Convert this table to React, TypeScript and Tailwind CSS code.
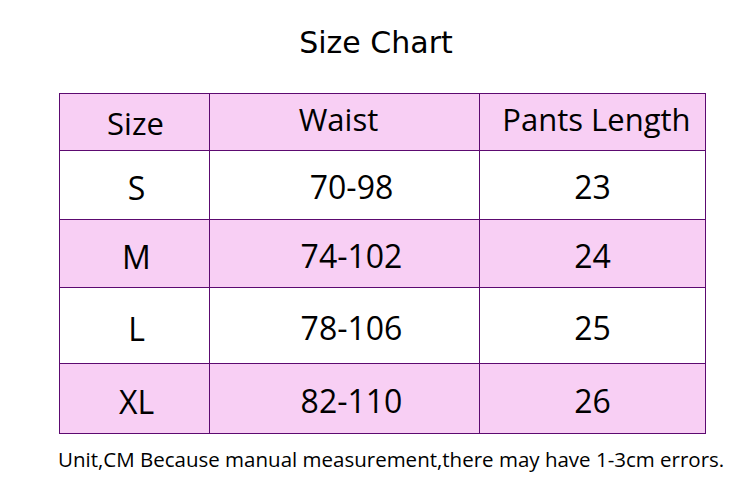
const rows = [
  { size: "S", waist: "70-98", length: "23", h: "h-[69px]", pink: false },
  { size: "M", waist: "74-102", length: "24", h: "h-[68px]", pink: true },
  { size: "L", waist: "78-106", length: "25", h: "h-[76px]", pink: false },
  { size: "XL", waist: "82-110", length: "26", h: "h-[70px]", pink: true },
];

const cell = "border border-[#5c0a70] text-center align-middle";

export default function App() {
  return (
    <div className="w-[750px] h-[501px] bg-white text-black overflow-hidden">
      <div className="pt-[23px] pl-[2px] text-center font-['DejaVu_Sans',sans-serif] text-[30px] leading-[40px]">
        Size Chart
      </div>
      <table className="ml-[59px] mt-[30px] border-collapse font-['Open_Sans',sans-serif] text-[32px]">
        <colgroup>
          <col className="w-[150px]" />
          <col className="w-[270px]" />
          <col className="w-[226px]" />
        </colgroup>
        <tbody>
          <tr className="h-[57px] bg-[#f8cff4] text-[31px]">
            <td className={cell + " pt-[2px] pl-[2px]"}>Size</td>
            <td className={cell + " pr-[12px] pb-[5px]"}>Waist</td>
            <td className={cell + " pl-[8px] pb-[5px]"}>Pants Length</td>
          </tr>
          {rows.map((r) => (
            <tr key={r.size} className={r.h + (r.pink ? " bg-[#f8cff4]" : " bg-white")}>
              <td className={cell + " pt-[6px] pl-[4px]"}>{r.size}</td>
              <td className={cell + " pt-[4px] pl-[14px]"}>{r.waist}</td>
              <td className={cell + " pt-[4px]"}>{r.length}</td>
            </tr>
          ))}
        </tbody>
      </table>
      <div className="mt-[11px] ml-[58px] font-['Open_Sans',sans-serif] text-[20.5px] leading-[28px]">
        Unit,CM Because manual measurement,there may have 1-3cm errors.
      </div>
    </div>
  );
}
